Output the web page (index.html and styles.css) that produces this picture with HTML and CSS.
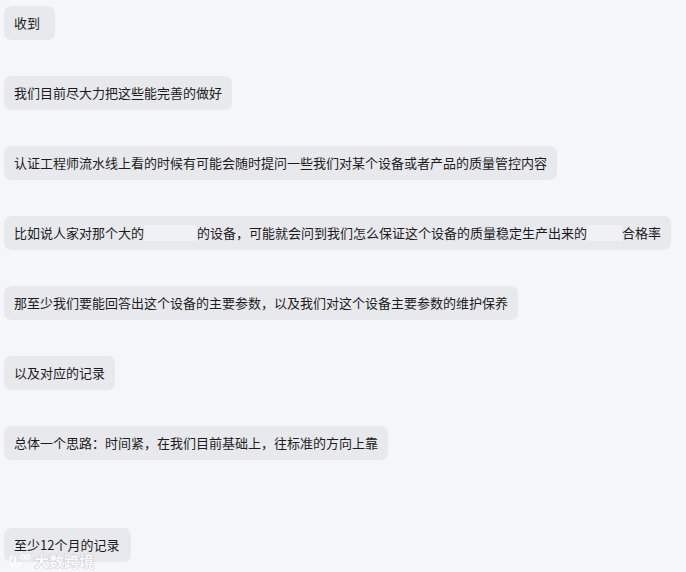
FILE: index.html
```html
<!DOCTYPE html>
<html lang="zh">
<head>
<meta charset="utf-8">
<link rel="stylesheet" href="styles.css">
</head>
<body>
<div class="chat">
  <div class="bubble short">收到</div>
  <div class="bubble">我们目前尽大力把这些能完善的做好</div>
  <div class="bubble">认证工程师流水线上看的时候有可能会随时提问一些我们对某个设备或者产品的质量管控内容</div>
  <div class="bubble">比如说人家对那个大的<span class="blur b1"></span>的设备，可能就会问到我们怎么保证这个设备的质量稳定生产出来的<span class="blur b2"></span>合格率</div>
  <div class="bubble">那至少我们要能回答出这个设备的主要参数，以及我们对这个设备主要参数的维护保养</div>
  <div class="bubble">以及对应的记录</div>
  <div class="bubble">总体一个思路：时间紧，在我们目前基础上，往标准的方向上靠</div>
  <div class="bubble last">至少12个月的记录</div>
</div>
<div class="watermark">
  <svg class="wm-logo" width="22" height="16" viewBox="0 0 22 16"><path d="M4 3 C1 6 1 11 5 13 C8 14.5 12 13 13 10" fill="none" stroke="#fff" stroke-width="2" stroke-linecap="round"/><path d="M7 4 L7 11" stroke="#fff" stroke-width="2" stroke-linecap="round"/><circle cx="15" cy="4" r="2" fill="none" stroke="#fff" stroke-width="1.5"/><circle cx="19.5" cy="4" r="2" fill="none" stroke="#fff" stroke-width="1.5"/></svg>
  <span class="wm-text">大数跨境</span>
</div>
</body>
</html>
```
FILE: styles.css
```css
html, body {
  margin: 0;
  padding: 0;
  background: #f5f6fa;
}
body {
  width: 686px;
  height: 572px;
  overflow: hidden;
  position: relative;
  font-family: "Noto Sans CJK SC", "Microsoft YaHei", sans-serif;
}
.chat {
  display: flex;
  flex-direction: column;
  align-items: flex-start;
  gap: 36px;
  padding: 6px 4px;
}
.bubble {
  background: #e8e9ed;
  border-radius: 7px;
  padding: 8px 10px;
  font-size: 13px;
  line-height: 18px;
  color: #1c1c1c;
  white-space: nowrap;
}
.bubble.short {
  padding-right: 15px;
}
.bubble.last {
  margin-top: 32px;
  padding-right: 12px;
}
.blur {
  display: inline-block;
  height: 16px;
  vertical-align: -3px;
  background: #f0f1f4;
}
.b1 { width: 53px; }
.b2 { width: 35px; }
.watermark {
  position: absolute;
  left: 8px;
  top: 552px;
  display: flex;
  align-items: center;
  gap: 4px;
  opacity: 0.85;
}
.wm-text {
  font-size: 15px;
  line-height: 17px;
  color: #fff;
  font-weight: bold;
  text-shadow: 0 0 1px #aaa, 0 0 1px #aaa;
}
```
